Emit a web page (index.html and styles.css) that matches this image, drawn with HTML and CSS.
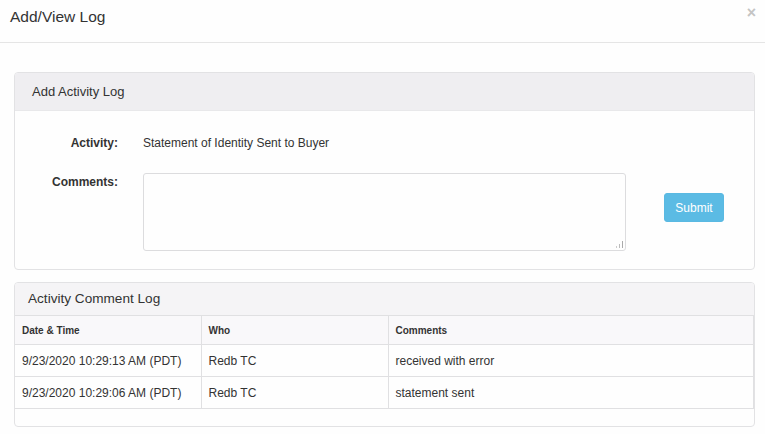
FILE: index.html
```html
<!DOCTYPE html>
<html>
<head>
<meta charset="utf-8">
<link rel="stylesheet" href="styles.css">
</head>
<body>
<div class="modal">
  <div class="modal-header">
    <h4 class="modal-title">Add/View Log</h4>
    <span class="close">&times;</span>
  </div>
  <div class="modal-body">
    <div class="panel panel-add">
      <div class="panel-heading">Add Activity Log</div>
      <div class="panel-body form">
        <div class="form-row">
          <label class="form-label">Activity:</label>
          <div class="form-value">Statement of Identity Sent to Buyer</div>
        </div>
        <div class="form-row form-row-comments">
          <label class="form-label">Comments:</label>
          <div class="textarea"><span class="grip"></span></div>
          <button class="btn-submit">Submit</button>
        </div>
      </div>
    </div>
    <div class="panel panel-log">
      <div class="panel-heading">Activity Comment Log</div>
      <div class="panel-body table-wrap">
        <table class="log-table">
          <thead>
            <tr><th class="col-date">Date &amp; Time</th><th class="col-who">Who</th><th>Comments</th></tr>
          </thead>
          <tbody>
            <tr><td>9/23/2020 10:29:13 AM (PDT)</td><td>Redb TC</td><td>received with error</td></tr>
            <tr><td>9/23/2020 10:29:06 AM (PDT)</td><td>Redb TC</td><td>statement sent</td></tr>
          </tbody>
        </table>
      </div>
    </div>
  </div>
</div>
</body>
</html>
```

FILE: styles.css
```css
* { box-sizing: border-box; }
html, body { margin: 0; padding: 0; background: #fefefe; }
body {
  font-family: "Liberation Sans", Arial, sans-serif;
  font-size: 12px;
  color: #333;
}
.modal { width: 765px; }
.modal-header {
  position: relative;
  height: 43px;
  padding: 8px 10px 0 10px;
  border-bottom: 1px solid #e5e5e5;
}
.modal-title {
  margin: 0;
  font-size: 15.5px;
  font-weight: normal;
  line-height: 18px;
  color: #333;
}
.close {
  position: absolute;
  right: 9px;
  top: 4px;
  font-size: 16px;
  font-weight: bold;
  color: #c4c4c4;
  line-height: 18px;
}
.modal-body {
  padding: 29px 10px 0 14px;
}
.panel {
  border: 1px solid #e2e2e4;
  border-radius: 4px;
  background: #fefefe;
}
.panel-add .panel-heading {
  height: 38px;
  padding: 0 17px;
  line-height: 37px;
  font-size: 13px;
  background: #efeef1;
  border-bottom: 1px solid #e8e8ea;
  border-radius: 3px 3px 0 0;
}
.panel-log { margin-top: 12px; }
.panel-log .panel-heading {
  height: 32px;
  padding: 0 13px;
  line-height: 32px;
  font-size: 13.6px;
  background: #f5f4f6;
  border-radius: 3px 3px 0 0;
}
.form { padding: 23px 0 18px 0; }
.form-row { display: flex; align-items: flex-start; }
.form-row-comments { margin-top: 21px; }
.form-label {
  width: 103px;
  text-align: right;
  font-weight: bold;
  line-height: 17px;
  padding-top: 1px;
}
.form-value {
  margin-left: 25px;
  line-height: 17px;
  padding-top: 1px;
}
.textarea {
  position: relative;
  margin-left: 25px;
  width: 483px;
  height: 78px;
  border: 1px solid #dcdcde;
  border-radius: 3px;
  background: #fefefe;
}
.grip {
  position: absolute;
  right: 2px;
  bottom: 2px;
  width: 7px;
  height: 7px;
  background:
    linear-gradient(#aaa, #aaa) 6px 0 / 1px 7px no-repeat,
    linear-gradient(#bbb, #bbb) 3px 3px / 1px 4px no-repeat,
    linear-gradient(#ccc, #ccc) 0 5px / 1px 2px no-repeat;
}
.btn-submit {
  margin: 20px 0 0 38px;
  width: 60px;
  height: 29px;
  padding: 0;
  border: 1px solid #5ab9e2;
  border-radius: 3px;
  background: #5bbbe4;
  color: #fff;
  font-family: "Liberation Sans", Arial, sans-serif;
  font-size: 12px;
}
.table-wrap { padding: 0 0 17px 0; }
.log-table {
  width: 739px;
  border-collapse: collapse;
  table-layout: fixed;
}
.log-table th, .log-table td {
  border: 1px solid #e0e0e2;
  text-align: left;
  padding: 0 7px;
}
.log-table th {
  height: 29px;
  font-size: 10px;
  font-weight: bold;
  background: #f9f8fa;
}
.log-table td {
  height: 32px;
  font-size: 12px;
}
.log-table tr > :first-child { border-left: 0; }
.col-date { width: 186px; }
.col-who { width: 187px; }
```
